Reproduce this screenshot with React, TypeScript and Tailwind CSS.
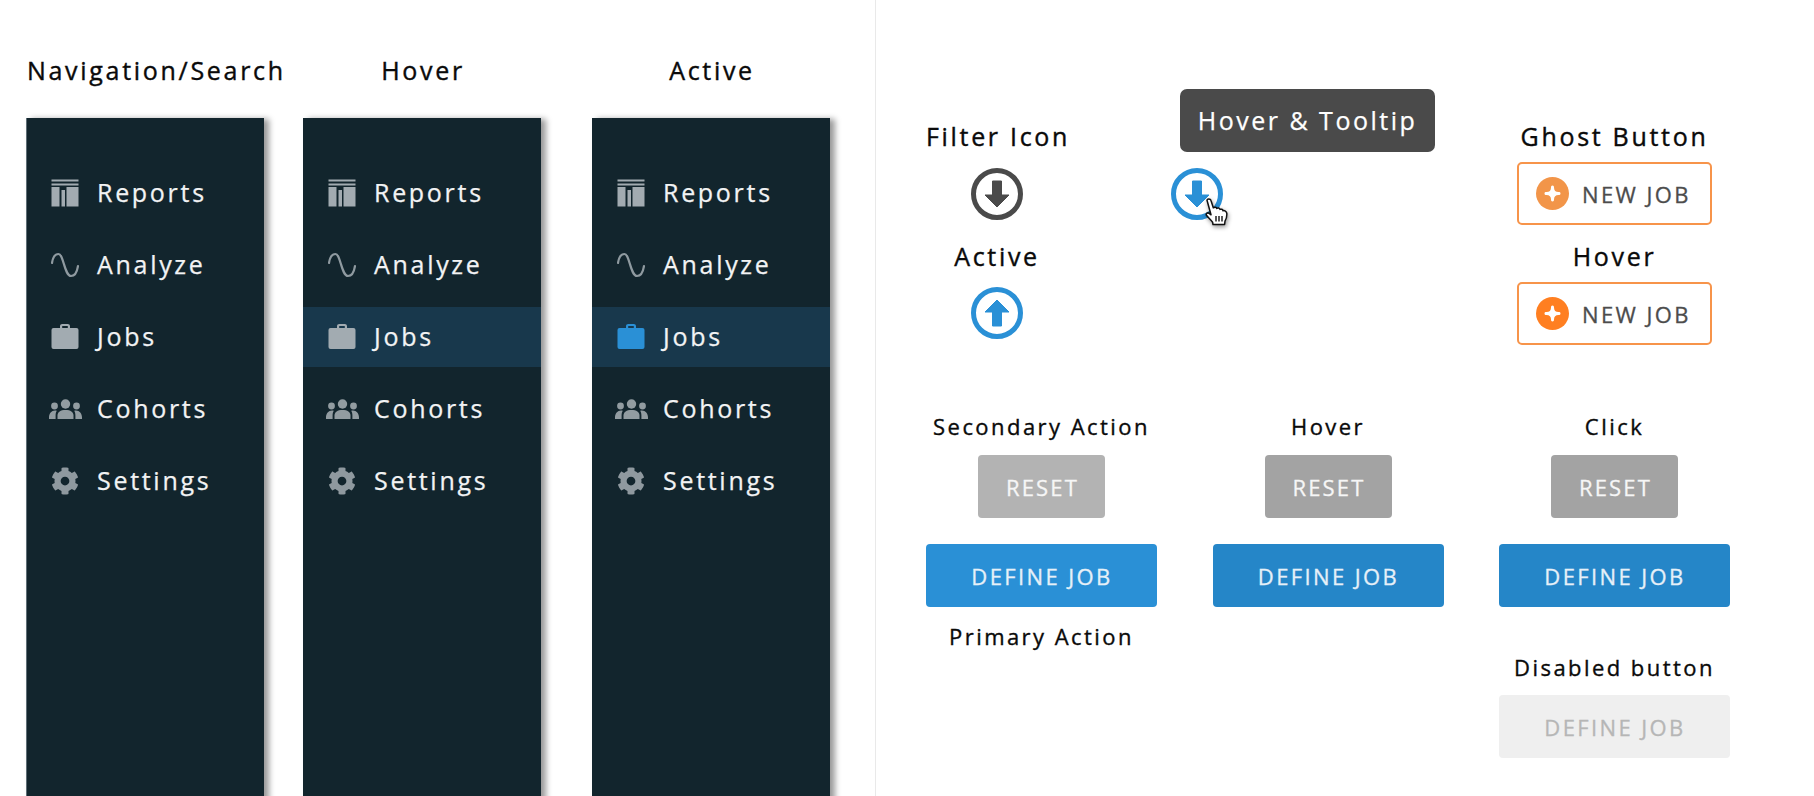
import React from "react";
import { FaCog } from "react-icons/fa";

const ReportsIcon = ({ c }: { c: string }) => (
  <svg width="28" height="28" viewBox="0 0 28 28" fill={c}>
    <rect x="0.5" y="0.5" width="27" height="2" />
    <rect x="0.5" y="4.5" width="27" height="2" />
    <rect x="0.5" y="8" width="8" height="19.5" />
    <rect x="10.5" y="11" width="3.5" height="16.5" />
    <rect x="15.5" y="8" width="12" height="19.5" />
  </svg>
);

const WaveIcon = ({ c }: { c: string }) => (
  <svg width="28" height="28" viewBox="0 0 28 28" fill="none" stroke={c} strokeWidth="2.2">
    <path d="M1 12C2 5.5 4.5 3 7.5 3C12.5 3 13.5 25 20 25C23.5 25 26 21.5 27 15" strokeLinecap="round" />
  </svg>
);

const CaseIcon = ({ c }: { c: string }) => (
  <svg width="28" height="28" viewBox="0 0 28 28" fill={c}>
    <path d="M9 5V3.2C9 1.9 10 1 11.2 1h5.6C18 1 19 1.9 19 3.2V5h-2.2V3.4c0-.2-.1-.3-.3-.3h-5c-.2 0-.3.1-.3.3V5z" />
    <rect x="0.5" y="5" width="27" height="21" rx="2" />
  </svg>
);

const UsersIcon = ({ c }: { c: string }) => (
  <svg width="33" height="20" viewBox="0 0 33 20" fill={c}>
    <circle cx="16.5" cy="5" r="4.7" />
    <circle cx="5.5" cy="7" r="3.4" />
    <circle cx="27.5" cy="7" r="3.4" />
    <path d="M8.5 20v-3.5C8.5 13 11.5 11 16.5 11s8 2 8 5.5V20z" />
    <path d="M0 20v-1.5C0 14.5 2.5 11.6 6 11.6c.6 0 1.2.1 1.8.2C7 13 6.6 14.6 6.6 16.5V20z" />
    <path d="M33 20v-1.5c0-4-2.500-6.900-6-6.900-.6 0-1.200.1-1.800.2.8 1.200 1.200 2.800 1.200 4.700V20z" />
  </svg>
);

type Row = { label: string; icon: string };
const rows: Row[] = [
  { label: "Reports", icon: "reports" },
  { label: "Analyze", icon: "wave" },
  { label: "Jobs", icon: "case" },
  { label: "Cohorts", icon: "users" },
  { label: "Settings", icon: "gear" },
];

const NavIcon = ({ name, c }: { name: string; c: string }) => {
  if (name === "reports") return <ReportsIcon c={c} />;
  if (name === "wave") return <WaveIcon c="#8f9aa0" />;
  if (name === "case") return <CaseIcon c={c} />;
  if (name === "users") return <UsersIcon c="#929ca1" />;
  return <FaCog size={28} color="#8f999f" />;
};

const Sidebar = ({ title, state, first }: { title: string; state: "none" | "hover" | "active"; first?: boolean }) => (
  <div className="flex w-[238px] flex-col">
    <div className={`h-[32px] shrink-0 whitespace-nowrap text-[25px] font-normal leading-[30px] tracking-[2.7px] text-[#0a0a0a] [-webkit-text-stroke:0.4px_currentColor] ${first ? "pl-[1px] text-left" : "pl-[2px] text-center"}`}>
      {title}
    </div>
    <div className={`mt-[31px] h-[700px] shrink-0 bg-[#12252d] pt-[45px] ${first ? "shadow-[inset_1px_0_0_#5f6e76,5px_1px_6px_rgba(0,0,0,0.4)]" : "shadow-[5px_1px_6px_rgba(0,0,0,0.4)]"}`}>
      <div className="flex flex-col gap-[12px]">
        {rows.map((r) => {
          const on = r.label === "Jobs" && state !== "none";
          const iconColor = r.label === "Jobs" && state === "active" ? "#2a90d6" : "#a2abb1";
          return (
            <div key={r.label} className={`flex h-[60px] items-center ${on ? "bg-[#18384c]" : ""}`}>
              <div className="flex w-[71px] items-center justify-center pl-[7px]">
                <NavIcon name={r.icon} c={iconColor} />
              </div>
              <span className="text-[25px] font-normal tracking-[2.7px] text-[#f2f3f4] [-webkit-text-stroke:0.25px_currentColor]">{r.label}</span>
            </div>
          );
        })}
      </div>
    </div>
  </div>
);

const ArrowCircle = ({ c, up }: { c: string; up?: boolean }) => (
  <svg width="52" height="52" viewBox="0 0 52 52">
    <circle cx="26" cy="26" r="23.5" fill="#fff" stroke={c} strokeWidth="5" />
    <path
      d={up ? "M26 13L38 25H30.5V39H21.5V25H14z" : "M26 39L14 27H21.5V13H30.5V27H38z"}
      fill={c}
      stroke={c}
      strokeLinejoin="round"
      strokeWidth="1"
    />
  </svg>
);

const HandCursor = () => (
  <svg width="26" height="30" viewBox="0 0 26 30" className="absolute left-[33px] top-[29px] drop-shadow-[1px_2px_2px_rgba(0,0,0,0.4)]">
    <path
      d="M3 3.2C3 1.6 6.4 1.4 6.9 3.2L9.3 10.8C10.5 9.8 12.3 10 12.8 11.4C13.9 10.6 15.6 11 16 12.4C17.2 11.8 18.7 12.3 19 13.8C20.4 13.2 22.6 14.2 22.8 16.4C23 19.2 22.2 22.2 21 24.2L20.6 27.5H9L8.6 25.2C7 23 4.4 20.6 2.6 18.6C1.4 17 3.4 15 5.2 16.4L7 17.8z"
      fill="#fff"
      stroke="#111"
      strokeWidth="1.5"
      strokeLinejoin="round"
    />
    <path d="M12 19V24.5M15 19V24.5M18 19V24.5" stroke="#111" strokeWidth="1.4" />
  </svg>
);

const GhostButton = ({ circle }: { circle: string }) => (
  <button className="flex h-[63px] w-[195px] items-center rounded-[5px] border-2 border-[#f7944a] bg-white pl-[17px]">
    <svg width="33" height="33" viewBox="0 0 33 33">
      <circle cx="16.500" cy="16.500" r="16.500" fill={circle} />
      <path
        d="M16.500 8.500C17.600 8.500 18 9.200 18 10.500C18 13.500 19.500 15 22.500 15C23.800 15 24.500 15.400 24.500 16.500C24.500 17.600 23.800 18 22.500 18C19.500 18 18 19.500 18 22.500C18 23.800 17.600 24.500 16.500 24.500C15.400 24.500 15 23.800 15 22.500C15 19.500 13.500 18 10.500 18C9.200 18 8.500 17.600 8.500 16.500C8.500 15.400 9.200 15 10.500 15C13.500 15 15 13.500 15 10.500C15 9.200 15.400 8.500 16.500 8.500z"
        fill="#fff"
      />
    </svg>
    <span className="ml-[13px] whitespace-nowrap pt-[1px] text-[22px] font-normal tracking-[2.4px] text-[#4c4c4c] [-webkit-text-stroke:0.3px_currentColor]">NEW JOB</span>
  </button>
);

const SmallLabel = ({ children, className = "" }: { children: React.ReactNode; className?: string }) => (
  <div className={`h-[28px] whitespace-nowrap text-center text-[22px] font-normal leading-[26px] tracking-[2.45px] text-[#0a0a0a] [-webkit-text-stroke:0.35px_currentColor] ${className}`}>
    {children}
  </div>
);

const Reset = ({ bg }: { bg: string }) => (
  <button className={`mx-auto mt-[14px] flex h-[63px] w-[127px] items-center justify-center rounded-[4px] pl-[2px] pt-[1px] text-[22px] font-normal tracking-[2.2px] text-[#f6f6f6] [-webkit-text-stroke:0.3px_currentColor] ${bg}`}>
    RESET
  </button>
);

const Define = ({ bg, text = "text-[#e6f0f8]", cls = "mt-[26px]" }: { bg: string; text?: string; cls?: string }) => (
  <button className={`flex h-[63px] w-[231px] items-center justify-center rounded-[4px] pl-[1px] pt-[2px] text-[22px] font-normal tracking-[2.4px] [-webkit-text-stroke:0.3px_currentColor] ${bg} ${text} ${cls}`}>
    DEFINE JOB
  </button>
);

const BigLabel = ({ children, className = "" }: { children: React.ReactNode; className?: string }) => (
  <div className={`h-[32px] whitespace-nowrap text-center text-[25px] font-normal leading-[32px] tracking-[2.7px] text-[#0a0a0a] [-webkit-text-stroke:0.4px_currentColor] ${className}`}>
    {children}
  </div>
);

export default function App() {
  return (
    <div className="flex h-[796px] w-[1814px] overflow-hidden bg-white font-['Open_Sans',sans-serif]">
      <div className="flex h-full w-[876px] shrink-0 border-r border-[#e9e9e9] pl-[26px] pt-[55px]">
        <Sidebar title="Navigation/Search" state="none" first />
        <div className="ml-[39px]">
          <Sidebar title="Hover" state="hover" />
        </div>
        <div className="ml-[51px]">
          <Sidebar title="Active" state="active" />
        </div>
      </div>

      <div className="flex-1 pl-[50px] pt-[120px]">
        <div className="flex h-[225px]">
          <div className="flex w-[142px] flex-col items-center">
            <BigLabel className="pl-[2px]">Filter Icon</BigLabel>
            <div className="mt-[16px] h-[52px]">
              <ArrowCircle c="#4a4a4a" />
            </div>
            <BigLabel className="mt-[20px]">Active</BigLabel>
            <div className="mt-[15px] h-[52px]">
              <ArrowCircle c="#2a90d6" up />
            </div>
          </div>
          <div className="relative ml-[103px] w-[52px] pt-[48px]">
            <div className="absolute left-[9px] top-[-31px] flex h-[63px] w-[255px] items-center justify-center whitespace-nowrap rounded-[7px] bg-[#4a4a4a] text-[25px] font-normal tracking-[2.5px] text-white [-webkit-text-stroke:0.25px_currentColor]">
              Hover &amp; Tooltip
            </div>
            <div className="relative h-[52px] w-[52px]">
              <ArrowCircle c="#2a90d6" />
              <HandCursor />
            </div>
          </div>
          <div className="ml-[294px] flex w-[195px] flex-col items-center">
            <BigLabel>Ghost Button</BigLabel>
            <div className="mt-[10px]">
              <GhostButton circle="#f29549" />
            </div>
            <BigLabel className="mt-[15px]">Hover</BigLabel>
            <div className="mt-[10px]">
              <GhostButton circle="#ff7f21" />
            </div>
          </div>
        </div>

        <div className="mt-[68px] grid w-[804px] grid-cols-[231px_231px_231px] gap-x-[55.5px]">
          <div className="flex flex-col">
            <SmallLabel>Secondary Action</SmallLabel>
            <Reset bg="bg-[#b3b3b3]" />
            <Define bg="bg-[#2a90d6]" />
            <SmallLabel className="mt-[16px]">Primary Action</SmallLabel>
          </div>
          <div className="flex flex-col">
            <SmallLabel>Hover</SmallLabel>
            <Reset bg="bg-[#a3a3a3]" />
            <Define bg="bg-[#2586c8]" />
          </div>
          <div className="flex flex-col">
            <SmallLabel>Click</SmallLabel>
            <Reset bg="bg-[#a3a3a3]" />
            <Define bg="bg-[#2586c8]" />
            <SmallLabel className="mt-[47px]">Disabled button</SmallLabel>
            <Define bg="bg-[#efefef]" text="text-[#b6b6b6]" cls="mt-[13px]" />
          </div>
        </div>
      </div>
    </div>
  );
}
